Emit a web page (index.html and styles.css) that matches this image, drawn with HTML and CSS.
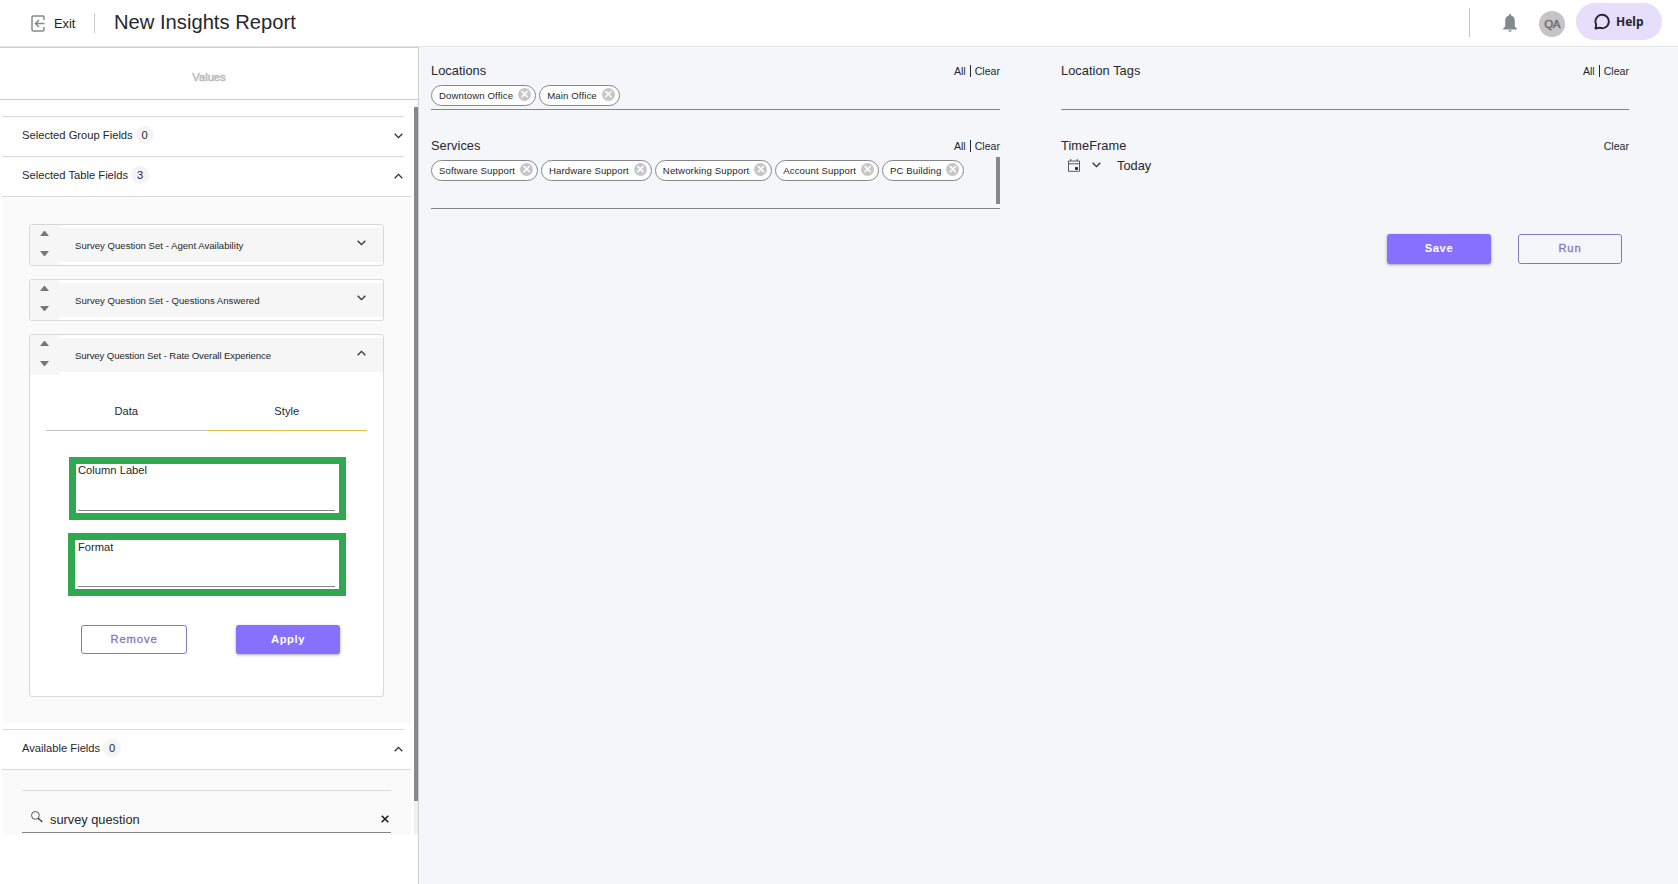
FILE: index.html
```html
<!DOCTYPE html>
<html lang="en">

<head>
    <meta charset="UTF-8">
    <meta name="viewport" content="width=device-width, initial-scale=1.0">
    <title>New Insights Report</title>
    <link rel="stylesheet" href="styles.css">
</head>

<body>
    <header class="topbar">
        <a class="exit" href="#">
            <svg width="14" height="17" viewBox="0 0 14 17" fill="none" stroke="#85888b" stroke-width="1.5">
                <path d="M13 5V2.3Q13 1 11.7 1H2.3Q1 1 1 2.3v12.4Q1 16 2.3 16h9.4q1.3 0 1.3-1.3V12" />
                <path d="M13.5 8.5h-9M8 5L4.5 8.5 8 12" />
            </svg>
            <span>Exit</span>
        </a>
        <h1 class="title">New Insights Report</h1>
        <div class="topbar-right">
            <svg class="bell" width="14" height="18" viewBox="0 0 14 18" fill="#85898d">
                <path d="M7 0Q8.2 0 8.2 1.5Q11.8 2.5 11.8 6.8V12.5L13.8 14.5V15.5H.2V14.5L2.2 12.5V6.8Q2.2 2.5 5.8 1.5Q5.8 0 7 0ZM5.2 16.2H8.8Q8.4 17.8 7 17.8T5.2 16.2Z" />
            </svg>
            <div class="avatar">QA</div>
            <button class="help">
                <svg width="17" height="17" viewBox="0 0 17 17" fill="none" stroke="#25232d" stroke-width="1.9" stroke-linejoin="round">
                    <path d="M1.5 15.5L2.2 11.6A6.7 6.7 0 1 1 5.6 14.7Z" />
                </svg>
                <span>Help</span>
            </button>
        </div>
    </header>

    <div class="page">
        <aside class="sidebar">
            <div class="sidebar-title">Values</div>
            <div class="scroll">
                <div class="section-head">
                    <span class="name">Selected Group Fields</span><span class="count">0</span>
                    <svg class="chev" width="9" height="6" viewBox="0 0 9 6"><path d="M.7.8L4.5 4.6 8.3.8" /></svg>
                </div>
                <div class="section-head">
                    <span class="name">Selected Table Fields</span><span class="count">3</span>
                    <svg class="chev" width="9" height="6" viewBox="0 0 9 6"><path d="M.7 5.2L4.5 1.4 8.3 5.2" /></svg>
                </div>
                <div class="fields">
                    <div class="card">
                        <div class="card-head">
                            <div class="handle"><i class="up"></i><i class="down"></i></div>
                            <div class="card-name"><span>Survey Question Set - Agent Availability</span>
                                <svg class="chev" width="9" height="6" viewBox="0 0 9 6"><path d="M.7.8L4.5 4.6 8.3.8" /></svg>
                            </div>
                        </div>
                    </div>
                    <div class="card">
                        <div class="card-head">
                            <div class="handle"><i class="up"></i><i class="down"></i></div>
                            <div class="card-name"><span>Survey Question Set - Questions Answered</span>
                                <svg class="chev" width="9" height="6" viewBox="0 0 9 6"><path d="M.7.8L4.5 4.6 8.3.8" /></svg>
                            </div>
                        </div>
                    </div>
                    <div class="card card-open">
                        <div class="card-head">
                            <div class="handle"><i class="up"></i><i class="down"></i></div>
                            <div class="card-name"><span class="tight">Survey Question Set - Rate Overall Experience</span>
                                <svg class="chev" width="9" height="6" viewBox="0 0 9 6"><path d="M.7 5.2L4.5 1.4 8.3 5.2" /></svg>
                            </div>
                        </div>
                        <div class="tabs">
                            <div class="tab">Data</div>
                            <div class="tab active">Style</div>
                        </div>
                        <div class="field label-field">
                            <label>Column Label</label>
                            <div class="line"></div>
                        </div>
                        <div class="field format-field">
                            <label>Format</label>
                            <div class="line"></div>
                        </div>
                        <div class="card-actions">
                            <button class="btn outline remove">Remove</button>
                            <button class="btn filled">Apply</button>
                        </div>
                    </div>
                </div>
                <div class="section-head available">
                    <span class="name">Available Fields</span><span class="count">0</span>
                    <svg class="chev" width="9" height="6" viewBox="0 0 9 6"><path d="M.7 5.2L4.5 1.4 8.3 5.2" /></svg>
                </div>
                <div class="search-wrap">
                    <div class="search">
                        <svg width="12" height="12" viewBox="0 0 12 12" fill="none" stroke="#444"><circle cx="4.4" cy="4.4" r="3.9" stroke-width=".9" /><path d="M7.2 7.2L11.3 11" stroke-width="1.5" /></svg>
                        <span class="query">survey question</span>
                        <svg class="x" width="8" height="8" viewBox="0 0 8 8" stroke="#1d1f22" stroke-width="1.6"><path d="M.7.7L7.3 7.3M7.3.7L.7 7.3" /></svg>
                    </div>
                </div>
                <div class="track"><div class="thumb"></div></div>
            </div>
        </aside>

        <main class="main">
            <div class="filters">
                <section class="filter">
                    <div class="filter-head"><span class="filter-name">Locations</span><div class="links"><span>All</span><b></b><span>Clear</span></div></div>
                    <div class="chips">
                        <div class="chip">Downtown Office<i></i></div>
                        <div class="chip">Main Office<i></i></div>
                    </div>
                </section>
                <section class="filter">
                    <div class="filter-head"><span class="filter-name">Location Tags</span><div class="links"><span>All</span><b></b><span>Clear</span></div></div>
                    <div class="chips"></div>
                </section>
                <section class="filter">
                    <div class="filter-head"><span class="filter-name">Services</span><div class="links"><span>All</span><b></b><span>Clear</span></div></div>
                    <div class="chips tall">
                        <div class="chip">Software Support<i></i></div>
                        <div class="chip">Hardware Support<i></i></div>
                        <div class="chip">Networking Support<i></i></div>
                        <div class="chip">Account Support<i></i></div>
                        <div class="chip">PC Building<i></i></div>
                        <div class="chips-thumb"></div>
                    </div>
                </section>
                <section class="filter">
                    <div class="filter-head"><span class="filter-name">TimeFrame</span><div class="links"><span>Clear</span></div></div>
                    <div class="timeframe">
                        <svg width="12" height="13" viewBox="0 0 12 13" fill="none" stroke="#555a60"><path d="M.5 2h11v10.300H.5zM.5 4.8h11M2.8 0v2M9.2 0v2" /><path d="M7.5 8.500h2v2h-2z" fill="#26292d" stroke="#26292d" /></svg>
                        <svg class="chev" width="9" height="6" viewBox="0 0 9 6"><path d="M.7.8L4.5 4.6 8.3.8" /></svg>
                        <span class="today">Today</span>
                    </div>
                </section>
            </div>
            <div class="actions">
                <button class="btn filled">Save</button>
                <button class="btn outline">Run</button>
            </div>
        </main>
    </div>
</body>

</html>
```
FILE: styles.css
```css
* {
    box-sizing: border-box;
}

body {
    margin: 0;
    height: 884px;
    overflow: hidden;
    font-family: "Liberation Sans", Arial, sans-serif;
    color: #25282c;
    background: #fff;
}

button {
    font-family: inherit;
    border: none;
    padding: 0;
}

svg {
    flex: none;
}

.chev {
    fill: none;
    stroke: #2c2f33;
    stroke-width: 1.3;
}

/* top bar */
.topbar {
    height: 47px;
    display: flex;
    align-items: center;
    padding-left: 31px;
    border-bottom: 1px solid #e4e5e7;
}

.exit {
    display: flex;
    align-items: center;
    gap: 9px;
    height: 20px;
    width: 64px;
    border-right: 1px solid #c9cacc;
    color: #1d1f22;
    font-size: 12.8px;
    text-decoration: none;
}

.exit svg {
    margin-top: 1px;
}

.title {
    margin: 0 0 1px 19px;
    font-size: 20.2px;
    font-weight: 400;
}

.topbar-right {
    display: flex;
    align-items: center;
    margin-left: auto;
    padding-right: 16px;
    height: 37px;
}

.topbar-right::before {
    content: "";
    width: 1px;
    height: 29px;
    margin: 0 33px 2px 0;
    background: #c5c6c8;
}

.bell {
    margin-right: 22px;
}

.avatar {
    width: 26px;
    height: 26px;
    margin: 1px 11px 0 0;
    border-radius: 50%;
    background: #c4c4c4;
    color: #6a6a6a;
    font-size: 11.5px;
    -webkit-text-stroke: 0.4px #6a6a6a;
    text-align: center;
    letter-spacing: -0.5px;
    line-height: 26px;
}

.help {
    display: flex;
    align-items: center;
    gap: 5px;
    width: 86px;
    height: 37px;
    margin-bottom: 4px;
    padding-left: 18px;
    border-radius: 19px;
    background: #e5dffc;
    color: #25232d;
    font: bold 12px "Noto Sans", sans-serif;
}

.page {
    display: flex;
    height: 837px;
}

/* sidebar */
.sidebar {
    width: 419px;
    border-right: 1px solid #cfd0d2;
    border-top: 1px solid #cfd0d2;
}

.sidebar-title {
    height: 52px;
    padding-top: 21px;
    border-bottom: 1px solid #c8c8c8;
    text-align: center;
    font-size: 11.2px;
    -webkit-text-stroke: 0.6px #bdbdbd;
    line-height: 16px;
    color: #bdbdbd;
}

.scroll {
    position: relative;
    height: 735px;
    padding: 16px 7px 0 2px;
}

.section-head {
    display: flex;
    align-items: center;
    width: 402px;
    height: 40px;
    padding: 0 1px 2px 20px;
    border-top: 1px solid #d9d9d9;
    font-size: 11.2px;
}

.section-head .name {
    margin-bottom: 2px;
}

.section-head .chev {
    margin-left: auto;
}

.count {
    width: 18px;
    height: 18px;
    margin: 0 0 1px 3px;
    border-radius: 50%;
    background: #f4f4f7;
    text-align: center;
    line-height: 18px;
}

.fields {
    width: 409px;
    height: 527px;
    padding: 27px 27px 0;
    border-top: 1px solid #d9d9d9;
    background: #fafafa;
}

.card {
    height: 42px;
    margin-bottom: 13px;
    border: 1px solid #d9d9db;
    border-radius: 3px;
    background: #fff;
}

.card-open {
    height: 363px;
}

.card-head {
    display: flex;
    align-items: center;
    height: 40px;
}

.handle {
    display: flex;
    flex-direction: column;
    justify-content: space-between;
    width: 29px;
    height: 40px;
    padding: 6px 0 9px 10px;
    background: #f6f6f6;
}

.up,
.down {
    width: 9px;
    border: 4.5px solid transparent;
}

.up {
    border-top: 0;
    border-bottom: 5px solid #77787c;
}

.down {
    border-bottom: 0;
    border-top: 5px solid #77787c;
}

.card-name {
    flex: 1;
    display: flex;
    align-items: center;
    height: 34px;
    padding: 0 17px 0 16px;
    background: #f6f6f6;
    font-size: 9.6px;
}

.tight {
    letter-spacing: -0.1px;
}

.card-name .chev {
    margin: 0 0 4px auto;
}

.tabs {
    display: flex;
    margin: 20px 16px 0;
}

.tab {
    flex: 1;
    height: 36px;
    border-bottom: 1px solid #c4c4c4;
    text-align: center;
    font-size: 11.2px;
    line-height: 32px;
}

.tab.active {
    border-color: #d9c04f;
}

.field {
    height: 63px;
    border: 7px solid #2fa84f;
    font-size: 11.2px;
}

.label-field {
    width: 277px;
    margin: 26px 0 0 39px;
    padding-left: 2px;
}

.format-field {
    width: 278px;
    margin: 13px 0 0 38px;
    padding-left: 3px;
}

.field label {
    display: block;
    height: 46px;
    line-height: 12px;
}

.format-field label {
    padding-top: 1px;
}

.line {
    width: 257px;
    height: 1px;
    background: #85868a;
}

.card-actions {
    display: flex;
    justify-content: space-between;
    margin: 29px 43px 0 51px;
}

.btn {
    width: 104px;
    height: 29px;
    padding-bottom: 2px;
    border-radius: 3px;
    font-size: 11.2px;
    letter-spacing: 1px;
}

.filled {
    background: #8870ff;
    color: #fff;
    font-weight: 700;
    letter-spacing: 0.6px;
    box-shadow: 0 1px 3px rgba(0, 0, 0, 0.35);
}

.outline {
    border: 1px solid #8577c4;
    background: transparent;
    color: #8577c4;
    letter-spacing: 0.9px;
    -webkit-text-stroke: 0.3px #8577c4;
}

.remove {
    width: 106px;
}

.available {
    margin-top: 6px;
}

.search-wrap {
    width: 409px;
    height: 66px;
    padding: 20px 20px 0;
    border-top: 1px solid #d9d9d9;
    background: #fafafa;
}

.search {
    display: flex;
    align-items: center;
    height: 43px;
    padding: 15px 2px 0 9px;
    border-top: 1px solid #dcdcdc;
    border-bottom: 1px solid #85868a;
    font-size: 12.8px;
}

.search svg {
    margin-bottom: 4px;
}

.query {
    margin-left: 7px;
}

.search .x {
    margin: 0 0 0 auto;
}

.track {
    position: absolute;
    top: 7px;
    right: 0;
    width: 4px;
    height: 728px;
    background: #efefef;
}

.thumb {
    height: 694px;
    background: #88888a;
}

/* main */
.main {
    flex: 1;
    padding: 15px 49px 0 12px;
    background: #f4f6fa;
}

.filters {
    display: grid;
    grid-template-columns: 569px 568px;
    column-gap: 61px;
    row-gap: 27px;
}

.filter-head {
    display: flex;
    justify-content: space-between;
    align-items: center;
    height: 20px;
    padding-bottom: 3px;
}

.filter-name {
    font-size: 12.8px;
    letter-spacing: 0.05px;
}

.today {
    font-size: 12.8px;
}

.links {
    display: flex;
    align-items: center;
    font-size: 10.6px;
}

.links b {
    width: 1px;
    height: 12px;
    margin: 0 4px;
    background: #25282c;
}

.chips {
    position: relative;
    display: flex;
    gap: 3px;
    height: 28px;
    padding-top: 3px;
    border-bottom: 1px solid #85868a;
}

.chips.tall {
    height: 52px;
}

.chip {
    display: flex;
    align-items: center;
    height: 21px;
    padding: 0 4px 0 7px;
    border: 1px solid #85868a;
    border-radius: 11px;
    background: #fff;
    font-size: 9.6px;
    letter-spacing: 0.12px;
}

/* round remove mark with a white cross */
.chip i {
    width: 13px;
    height: 13px;
    margin: 0 0 2px 5px;
    border-radius: 50%;
    background: #c6c6c6;
    color: #fff;
    font: bold 12px/13px "DejaVu Sans", sans-serif;
    text-align: center;
}

.chip i::before {
    content: "×";
}

.chips-thumb {
    position: absolute;
    right: 0;
    top: 0;
    width: 4px;
    height: 47px;
    background: #88888a;
}

.timeframe {
    display: flex;
    align-items: center;
    height: 16px;
    padding-left: 7px;
}

.timeframe .chev {
    margin: 0 16px 0 12px;
}

/* save / run */
.actions {
    display: flex;
    justify-content: flex-end;
    gap: 27px;
    margin-top: 25px;
    padding-right: 7px;
}

.actions .btn {
    height: 30px;
}
```
